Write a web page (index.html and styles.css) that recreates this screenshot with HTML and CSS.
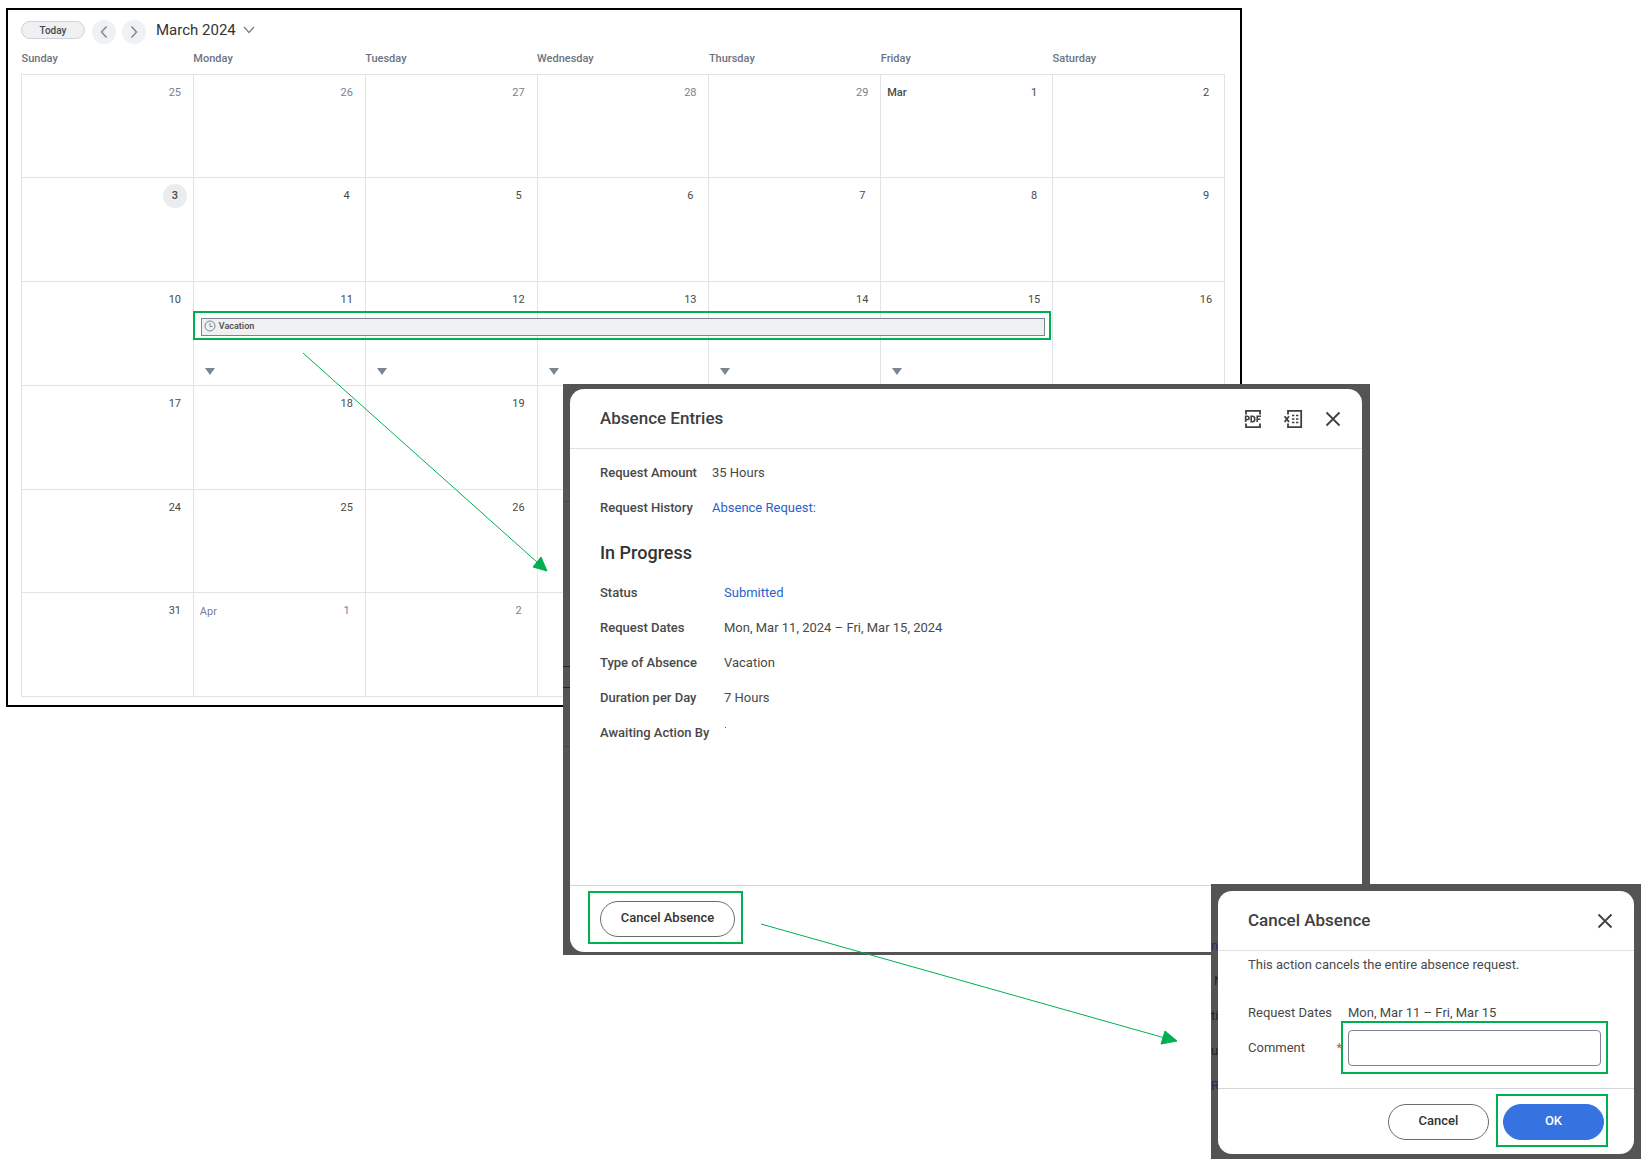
FILE: index.html
```html
<!DOCTYPE html>
<html lang="en">
<head>
  <meta charset="UTF-8">
  <meta name="viewport" content="width=device-width, initial-scale=1.0">
  <title>Cancel an Absence</title>
  <link rel="stylesheet" href="styles.css">
</head>
<body>
  <!-- Calendar -->
  <main class="calendar">
    <div class="toolbar">
      <button class="today">Today</button>
      <button class="nav" aria-label="Previous month">
        <svg width="24" height="24" viewBox="0 0 24 24"><path d="M14.5 6.5 L9.5 12 L14.5 17.5"/></svg>
      </button>
      <button class="nav" aria-label="Next month">
        <svg width="24" height="24" viewBox="0 0 24 24"><path d="M9.5 6.5 L14.5 12 L9.5 17.5"/></svg>
      </button>
      <button class="month">March 2024
        <svg width="12" height="8" viewBox="0 0 12 8"><path d="M1 1 L6 6.5 L11 1"/></svg>
      </button>
    </div>

    <table class="days">
      <thead>
        <tr><th>Sunday</th><th>Monday</th><th>Tuesday</th><th>Wednesday</th><th>Thursday</th><th>Friday</th><th>Saturday</th></tr>
      </thead>
      <tbody id="weeks"></tbody>
    </table>
  </main>

  <!-- Absence entries -->
  <div class="backdrop entries-backdrop">
    <section class="dialog" role="dialog" aria-labelledby="entriesTitle">
      <header>
        <h2 id="entriesTitle">Absence Entries</h2>
        <button class="icon" aria-label="Export to PDF">
          <svg width="20" height="20" viewBox="0 0 20 20">
            <path d="M3 5.5 V1.8 H17 V5.5 M3 14.5 V18.2 H17 V14.5"/>
            <path class="thin" d="M2.6 13 V7.2 H4.2 Q6 7.2 6 8.9 Q6 10.6 4.2 10.6 H2.6 M8.2 7.2 V12.8 H9.4 Q11.8 12.8 11.8 10 Q11.8 7.2 9.4 7.2 Z M14.2 13 V7.2 H18 M14.2 10.2 H17.4"/>
          </svg>
        </button>
        <button class="icon" aria-label="Export to Excel">
          <svg width="20" height="20" viewBox="0 0 20 20">
            <path d="M5 5.5 V1.8 H18.2 V18.2 H5 V14.5"/>
            <path d="M1.6 7.2 L6 13 M6 7.2 L1.6 13"/>
            <path class="thin" d="M9 6.5 H11.4 M13 6.5 H15.4 M9 10 H11.4 M13 10 H15.4 M9 13.5 H11.4 M13 13.5 H15.4"/>
          </svg>
        </button>
        <button class="icon" aria-label="Close">
          <svg width="20" height="20" viewBox="0 0 20 20"><path d="M3.5 3.5 L16.5 16.5 M16.5 3.5 L3.5 16.5"/></svg>
        </button>
      </header>
      <div class="content">
        <dl>
          <dt>Request Amount</dt><dd>35 Hours</dd>
          <dt>Request History</dt><dd><a href="#">Absence Request:</a></dd>
        </dl>
        <h3>In Progress</h3>
        <dl class="wide">
          <dt>Status</dt><dd><a href="#">Submitted</a></dd>
          <dt>Request Dates</dt><dd>Mon, Mar 11, 2024 – Fri, Mar 15, 2024</dd>
          <dt>Type of Absence</dt><dd>Vacation</dd>
          <dt>Duration per Day</dt><dd>7 Hours</dd>
          <dt>Awaiting Action By</dt><dd><span class="tick"></span></dd>
        </dl>
      </div>
      <footer>
        <div class="marked mark-absence"><button class="pill">Cancel Absence</button></div>
      </footer>
    </section>
  </div>

  <!-- Cancel confirmation -->
  <div class="backdrop cancel-backdrop">
    <div class="behind" aria-hidden="true">
      <span class="blue">ni</span><span class="right">N</span><span>ti</span><span>u</span><span class="blue">R</span>
    </div>
    <section class="dialog" role="dialog" aria-labelledby="cancelTitle">
      <header>
        <h2 id="cancelTitle">Cancel Absence</h2>
        <button class="icon" aria-label="Close">
          <svg width="20" height="20" viewBox="0 0 20 20"><path d="M3.5 3.5 L16.5 16.5 M16.5 3.5 L3.5 16.5"/></svg>
        </button>
      </header>
      <div class="content">
        <p>This action cancels the entire absence request.</p>
        <div class="field">
          <span>Request Dates</span>
          <span>Mon, Mar 11 – Fri, Mar 15</span>
        </div>
        <div class="field">
          <label for="comment">Comment <span class="required">*</span></label>
          <div class="marked mark-comment"><input type="text" id="comment" required></div>
        </div>
      </div>
      <footer>
        <button class="pill">Cancel</button>
        <div class="marked mark-ok"><button class="pill primary">OK</button></div>
      </footer>
    </section>
  </div>

  <!-- Arrows between the steps -->
  <svg class="arrows" width="1200" height="1060" viewBox="0 0 1200 1060">
    <path d="M303 353 L538 563"/>
    <polygon points="547,571 533,567 541,557"/>
    <path d="M761 924 L1165 1038"/>
    <polygon points="1177,1041 1161,1044 1165,1031"/>
  </svg>

  <script>
    const weeks = [
      [25, 26, 27, 28, 29, 1, 2],
      [3, 4, 5, 6, 7, 8, 9],
      [10, 11, 12, 13, 14, 15, 16],
      [17, 18, 19, 20, 21, 22, 23],
      [24, 25, 26, 27, 28, 29, 30],
      [31, 1, 2, 3, 4, 5, 6]
    ];

    const vacation = `
      <div class="event marked mark-event">
        <svg width="12" height="12" viewBox="0 0 12 12"><circle cx="6" cy="6" r="5"/><path d="M6 3 V6.5 H8.5"/></svg>
        Vacation
      </div>`;

    const body = document.getElementById('weeks');
    weeks.forEach((week, row) => {
      const tr = document.createElement('tr');
      week.forEach((day, col) => {
        const td = document.createElement('td');
        const outside = (row === 0 && day > 20) || (row === 5 && day < 20);
        let month = '';
        if (row === 0 && day === 1) month = '<span class="name">Mar</span>';
        if (row === 5 && day === 1) month = '<span class="name">Apr</span>';
        td.innerHTML = `<div class="date">${month}<span class="number">${day}</span></div>`;
        if (outside) td.classList.add('outside');
        if (day === 3 && row === 1) td.classList.add('current');
        if (row === 2 && col === 1) td.innerHTML += vacation;
        if (row === 2 && col > 0 && col < 6) td.innerHTML += '<div class="more"></div>';
        tr.appendChild(td);
      });
      body.appendChild(tr);
    });
  </script>
</body>
</html>
```

FILE: styles.css
```css
* {
  box-sizing: border-box;
}

body {
  position: relative;
  min-height: 1165px;
  margin: 0;
  padding: 8px 6px;
  background-color: #fff;
  color: #494949;
  font-family: Roboto, "Liberation Sans", sans-serif;
  font-size: 13px;
}

button {
  padding: 0;
  border: none;
  background: none;
  color: inherit;
  font-family: inherit;
}

svg {
  display: block;
  fill: none;
  stroke: #7b858f;
}

h2, h3, p, dl, dd {
  margin: 0;
}

a {
  color: #2a62c9;
  text-decoration: none;
}

/* Calendar */
.calendar {
  width: 1236px;
  padding: 10px 13px 8px;
  border: 2px solid #000;
}

.toolbar {
  display: flex;
  align-items: center;
  height: 24px;
}

.today {
  width: 64px;
  height: 18px;
  margin: 0 7px 4px 0;
  border: 1px solid #ced3d9;
  border-radius: 9px;
  background-color: #eef0f2;
  font-size: 10px;
  font-weight: 500;
}

.nav {
  width: 24px;
  height: 24px;
  margin-right: 6px;
  border-radius: 50%;
  background-color: #f0f1f2;
}

.nav svg, .month svg {
  stroke-width: 1.4;
}

.month {
  display: flex;
  align-items: center;
  gap: 7px;
  margin: 0 0 4px 4px;
  color: #333;
  font-size: 15px;
}

.days {
  width: 1204px;
  height: 653px;
  table-layout: fixed;
  border-collapse: collapse;
}

.days th {
  height: 30px;
  padding: 0;
  color: #6b7480;
  font-size: 11px;
  font-weight: 500;
  text-align: left;
}

.days td {
  position: relative;
  height: 103px;
  padding: 6px;
  border: 1px solid #e0e3e7;
  vertical-align: top;
}

.date {
  display: flex;
  align-items: center;
  justify-content: space-between;
  height: 24px;
  font-size: 11px;
}

.name {
  font-weight: 500;
}

.outside .name {
  font-weight: 400;
}

.number {
  width: 24px;
  margin-left: auto;
  border-radius: 50%;
  line-height: 24px;
  text-align: center;
}

.outside {
  color: #78818c;
}

.current .number {
  background-color: #ebecee;
  font-weight: 500;
}

/* The entry spans Monday to Friday */
.event {
  position: absolute;
  z-index: 1;
  top: 36px;
  left: 7px;
  display: flex;
  align-items: center;
  gap: 3px;
  width: calc(500% - 10px);
  height: 18px;
  padding: 0 2px 2px;
  border: 1px solid #7b858f;
  background-color: #eef0f2;
  font-size: 9px;
  font-weight: 500;
}

.more {
  position: absolute;
  bottom: 10px;
  left: 11px;
  border: 5px solid transparent;
  border-top: 7px solid #7b858f;
  border-bottom: none;
}

/* Green frames round the things to click */
.marked::after {
  content: "";
  position: absolute;
  border: 2px solid #00b050;
  pointer-events: none;
}

.mark-absence, .mark-comment, .mark-ok {
  position: relative;
}

.mark-event::after {
  inset: -8px -7px -5px -9px;
}

.mark-absence::after {
  inset: -10px -8px -7px -12px;
}

.mark-comment::after {
  inset: -9px -7px -8px;
}

.mark-ok::after {
  inset: -10px -4px -7px -7px;
}

/* Dialogs */
.backdrop {
  position: absolute;
  z-index: 2;
  display: flex;
  background-color: #545454;
}

.entries-backdrop {
  top: 384px;
  left: 563px;
  width: 807px;
  height: 571px;
  padding: 5px 8px 3px 7px;
  background-image: linear-gradient(#222, #222), linear-gradient(#222, #222), linear-gradient(#444, #444), linear-gradient(#444, #444);
  background-repeat: no-repeat;
  background-size: 7px 1px;
  background-position: 0 282px, 0 303px, 0 117px, 0 362px;
}

.cancel-backdrop {
  top: 884px;
  left: 1211px;
  width: 430px;
  height: 275px;
  padding: 7px 7px 5px;
}

.behind {
  position: absolute;
  top: 44px;
  left: 0;
  display: flex;
  flex-direction: column;
  width: 7px;
  overflow: hidden;
  color: #222;
  line-height: 35px;
}

.behind .blue {
  color: #1c2f58;
}

.behind .right {
  padding-left: 3px;
}

.dialog {
  position: relative;
  display: flex;
  flex: 1;
  flex-direction: column;
  border-radius: 14px;
  background-color: #fff;
}

.dialog header {
  display: flex;
  align-items: center;
  gap: 20px;
  height: 60px;
  padding: 0 19px 0 30px;
  border-bottom: 1px solid #dde2e8;
}

.dialog h2 {
  flex: 1;
  padding-bottom: 2px;
  color: #404040;
  font-size: 17px;
  font-weight: 500;
}

.icon svg {
  stroke: #404040;
  stroke-width: 1.8;
}

.icon .thin {
  stroke-width: 1.6;
}

.content {
  flex: 1;
  padding: 6px 33px 0 30px;
}

dl {
  display: grid;
  grid-template-columns: 112px 1fr;
  line-height: 35px;
}

dl.wide {
  grid-template-columns: 124px 1fr;
}

dt {
  font-weight: 500;
}

h3 {
  padding: 16px 0 10px;
  color: #333;
  font-size: 18px;
  font-weight: 500;
  line-height: 24px;
}

.tick {
  display: block;
  width: 1px;
  height: 1px;
  margin: 12px 0 0 1px;
  background-color: #2a62c9;
}

.dialog footer {
  display: flex;
  gap: 14px;
  padding: 15px 30px;
  border-top: 1px solid #d3d5d8;
}

.pill {
  width: 135px;
  height: 36px;
  padding-bottom: 3px;
  border: 1px solid #6b6b6b;
  border-radius: 18px;
  color: #333;
  font-size: 13px;
  font-weight: 500;
}

.cancel-backdrop .content {
  padding-top: 4px;
}

.cancel-backdrop p {
  margin-bottom: 20px;
  line-height: 20px;
}

.field {
  display: grid;
  grid-template-columns: 100px 1fr;
  height: 35px;
  line-height: 35px;
}

.field label {
  display: flex;
  justify-content: space-between;
  padding-right: 6px;
}

.required {
  color: #de4b37;
}

.field input {
  display: block;
  width: 100%;
  height: 36px;
  border: 1px solid #7b8594;
  border-radius: 4px;
}

.cancel-backdrop footer {
  justify-content: flex-end;
  padding-bottom: 14px;
}

.cancel-backdrop .pill {
  width: 101px;
  padding-bottom: 4px;
}

.cancel-backdrop .primary {
  border-color: #3673e0;
  background-color: #3673e0;
  color: #fff;
}

.arrows {
  position: absolute;
  z-index: 3;
  top: 0;
  left: 0;
  stroke: #00b050;
  pointer-events: none;
}

.arrows polygon {
  fill: #00b050;
}
```
